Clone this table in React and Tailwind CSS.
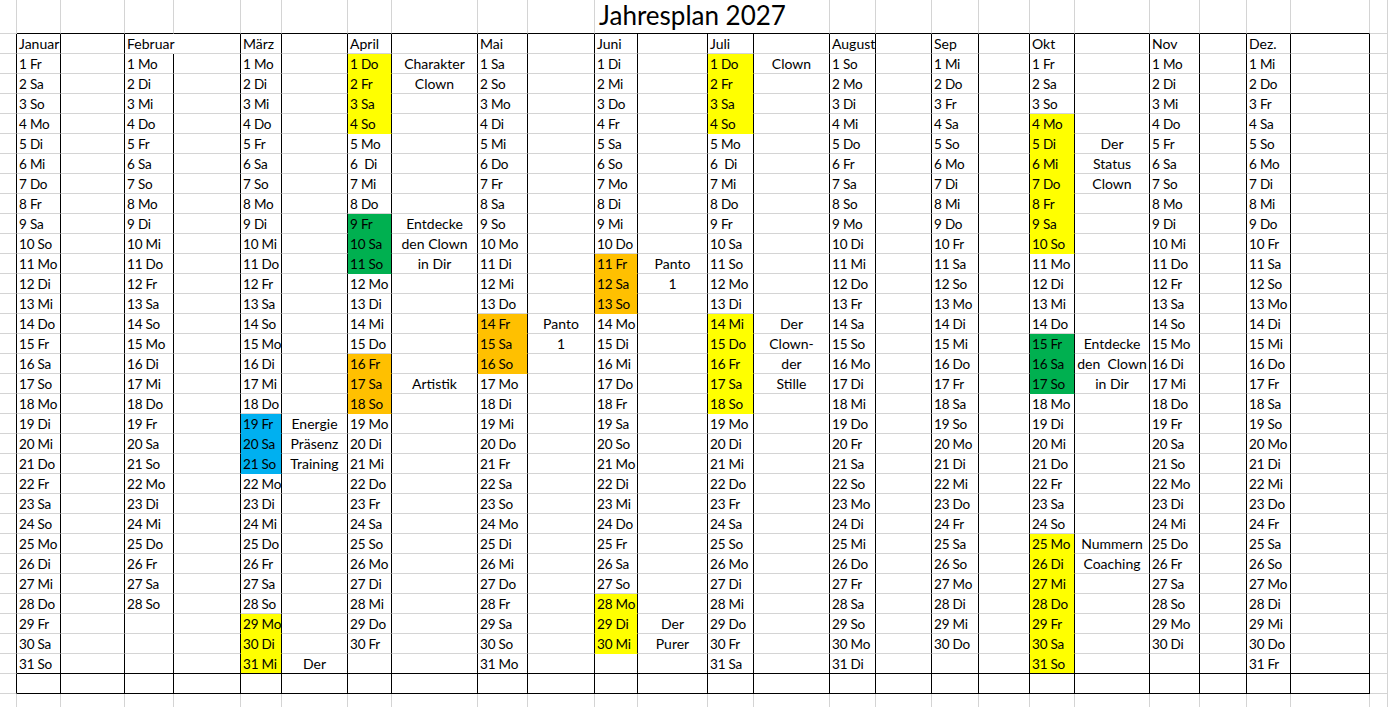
import React from 'react'

const months = [
    { name: 'Januar', days: 31 },
    { name: 'Februar', days: 28 },
    { name: 'März', days: 31 },
    { name: 'April', days: 30 },
    { name: 'Mai', days: 31 },
    { name: 'Juni', days: 30 },
    { name: 'Juli', days: 31 },
    { name: 'August', days: 31 },
    { name: 'Sep', days: 30 },
    { name: 'Okt', days: 31 },
    { name: 'Nov', days: 30 },
    { name: 'Dez.', days: 31 },
]

const weekdays = ['So', 'Mo', 'Di', 'Mi', 'Do', 'Fr', 'Sa']

// highlighted blocks per month: [from, to, colour]
const fills = {
    2: [[19, 21, 'blue'], [29, 31, 'yellow']],
    3: [[1, 4, 'yellow'], [9, 11, 'green'], [16, 18, 'orange']],
    4: [[14, 16, 'orange']],
    5: [[11, 13, 'orange'], [28, 30, 'yellow']],
    6: [[1, 4, 'yellow'], [14, 18, 'yellow']],
    9: [[4, 10, 'yellow'], [15, 17, 'green'], [25, 31, 'yellow']],
}

const notes = {
    2: { 19: 'Energie', 20: 'Präsenz', 21: 'Training', 31: 'Der' },
    3: { 1: 'Charakter', 2: 'Clown', 9: 'Entdecke', 10: 'den Clown', 11: 'in Dir', 17: 'Artistik' },
    4: { 14: 'Panto', 15: '1' },
    5: { 11: 'Panto', 12: '1', 29: 'Der', 30: 'Purer' },
    6: { 1: 'Clown', 14: 'Der', 15: 'Clown-', 16: 'der', 17: 'Stille' },
    9: { 5: 'Der', 6: 'Status', 7: 'Clown', 15: 'Entdecke', 16: 'den  Clown', 17: 'in Dir', 25: 'Nummern', 26: 'Coaching' },
}

// odd spacing as typed in the sheet
const labelFix = { '3-6': '6  Di', '6-6': '6  Di' }

const R = {
    black: 'border-r-black',
    gray: 'border-r-[#d4d4d4]',
    none: 'border-r-transparent',
}
const B = {
    black: 'border-b-black',
    gray: 'border-b-[#d4d4d4]',
    yellow: 'border-b-[#ffff00]',
    green: 'border-b-[#00b050]',
    orange: 'border-b-[#ffc000]',
    blue: 'border-b-[#00b0f0]',
}
const BG = {
    yellow: 'bg-[#ffff00]',
    green: 'bg-[#00b050]',
    orange: 'bg-[#ffc000]',
    blue: 'bg-[#00b0f0]',
}

function fillFor(m, d) {
    const list = fills[m] || []
    const hit = list.find(([a, b]) => d >= a && d <= b)
    return hit ? hit[2] : null
}

function Cell({ right, bottom, bg, note, day, children }) {
    return (
        <div
            className={`h-5 border-r border-b whitespace-pre leading-5 text-black overflow-visible
                ${R[right]} ${B[bottom]} ${bg ? BG[bg] : ''}
                ${note ? 'text-center text-[14px]' : 'pl-[2px]'}
                ${day ? 'text-[13.5px] tracking-[-0.2px]' : 'text-[14px]'}`}
        >
            {children}
        </div>
    )
}

export default function App() {
    const inTable = (c) => c >= 1 && c <= 24

    const rows = []

    // title row
    for (let c = 0; c <= 25; c++) {
        if (c === 11) {
            rows.push(
                <div key="t" className="col-span-4 h-[34px] border-r border-b border-r-[#d4d4d4] border-b-black pl-[4px] text-[26px] leading-[30px] text-black whitespace-nowrap">
                    Jahresplan 2027
                </div>
            )
            c = 14
            continue
        }
        rows.push(
            <div
                key={`t-${c}`}
                className={`h-[34px] border-r border-b border-r-[#d4d4d4] ${inTable(c) ? 'border-b-black' : 'border-b-[#d4d4d4]'}`}
            />
        )
    }

    // month header row
    for (let c = 0; c <= 25; c++) {
        const m = Math.floor((c - 1) / 2)
        const isDay = inTable(c) && c % 2 === 1
        let right = c <= 24 ? 'black' : 'gray'
        if (c === 3) right = 'none'
        rows.push(
            <Cell key={`h-${c}`} right={right} bottom="gray">
                {isDay ? months[m].name : ''}
            </Cell>
        )
    }

    // day rows
    for (let d = 1; d <= 31; d++) {
        for (let c = 0; c <= 25; c++) {
            const right = c <= 24 ? 'black' : 'gray'
            if (!inTable(c)) {
                rows.push(<Cell key={`${d}-${c}`} right={right} bottom="gray" />)
                continue
            }
            const m = Math.floor((c - 1) / 2)
            const isDay = c % 2 === 1
            const last = d === 31
            if (isDay) {
                const has = d <= months[m].days
                const fill = has ? fillFor(m, d) : null
                let label = ''
                if (has) {
                    label = labelFix[`${m}-${d}`] || `${d} ${weekdays[new Date(2027, m, d).getDay()]}`
                }
                rows.push(
                    <Cell key={`${d}-${c}`} right={right} bottom={last ? 'black' : fill || 'gray'} bg={fill} day>
                        {label}
                    </Cell>
                )
            } else {
                rows.push(
                    <Cell key={`${d}-${c}`} right={right} bottom={last ? 'black' : 'gray'} note>
                        {(notes[m] && notes[m][d]) || ''}
                    </Cell>
                )
            }
        }
    }

    // empty closing row of the table
    for (let c = 0; c <= 25; c++) {
        rows.push(
            <Cell key={`e-${c}`} right={c <= 24 ? 'black' : 'gray'} bottom={inTable(c) ? 'black' : 'gray'} />
        )
    }

    // plain sheet row below
    for (let c = 0; c <= 25; c++) {
        rows.push(<Cell key={`x-${c}`} right="gray" bottom="gray" />)
    }

    return (
        <div className="h-screen overflow-hidden bg-white font-['Lato',sans-serif]">
            <div className="grid grid-cols-[17px_44px_64px_49px_67px_41px_66px_44px_86px_50px_67px_43px_70px_46px_76px_46px_56px_47px_51px_45px_75px_50px_47px_44px_79px_1fr]">
                {rows}
            </div>
        </div>
    )
}
